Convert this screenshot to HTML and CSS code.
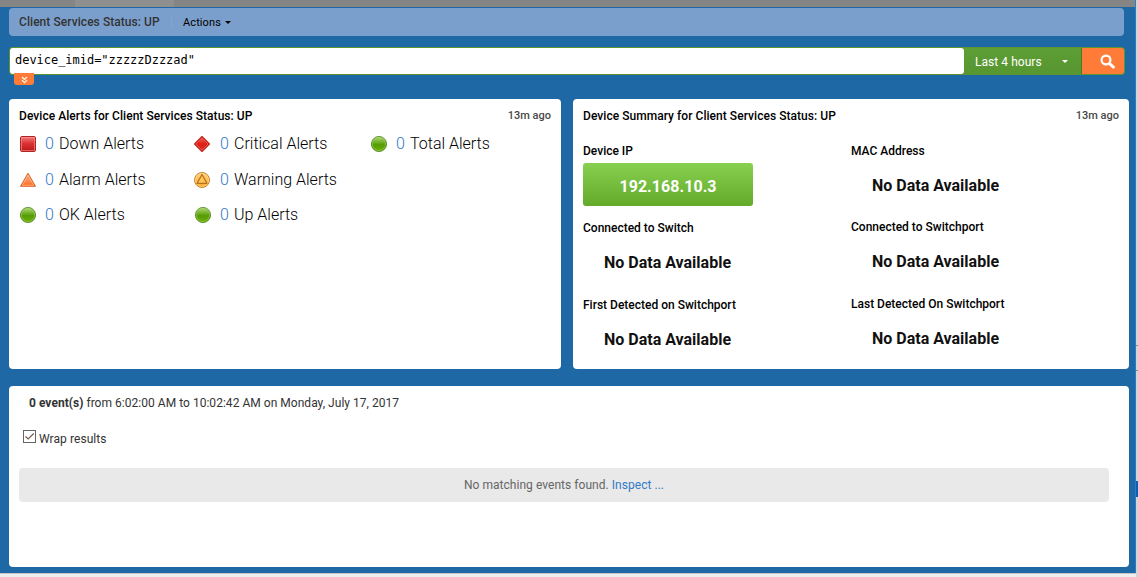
FILE: index.html
```html
<!DOCTYPE html>
<html lang="en">
<head>
<meta charset="utf-8">
<title>Client Services Status: UP</title>
<link rel="stylesheet" href="styles.css">
</head>
<body>
<svg class="defs" width="0" height="0" aria-hidden="true">
  <defs>
    <linearGradient id="red" x1="0" y1="0" x2="0" y2="1"><stop offset="0" stop-color="#f08080"/><stop offset=".45" stop-color="#dc3434"/><stop offset="1" stop-color="#b91616"/></linearGradient>
    <linearGradient id="crit" x1="0" y1="0" x2="0" y2="1"><stop offset="0" stop-color="#f4675c"/><stop offset=".5" stop-color="#e21d12"/><stop offset="1" stop-color="#d0322b"/></linearGradient>
    <linearGradient id="orange" x1="0" y1="0" x2="0" y2="1"><stop offset="0" stop-color="#f9a070"/><stop offset=".55" stop-color="#f8905a"/><stop offset="1" stop-color="#ff6512"/></linearGradient>
    <linearGradient id="amber" x1="0" y1="0" x2="0" y2="1"><stop offset="0" stop-color="#ffd27d"/><stop offset="1" stop-color="#ffac2c"/></linearGradient>
    <linearGradient id="green" x1="0" y1="0" x2="0" y2="1"><stop offset="0" stop-color="#b4dc78"/><stop offset=".55" stop-color="#559c04"/><stop offset="1" stop-color="#6fb10b"/></linearGradient>
    <symbol id="ok" viewBox="0 0 16 16"><circle cx="8" cy="8" r="7.6" fill="url(#green)" stroke="#4b811b" stroke-width=".8"/><circle cx="8" cy="8" r="6.6" fill="none" stroke="#a4d36a" stroke-opacity=".65" stroke-width=".8"/></symbol>
  </defs>
</svg>
<div class="window">
  <div class="app">
    <div class="tabstrip"><span class="tab"></span></div>
    <header class="toolbar">
      <span class="toolbar-title">Client Services Status: UP</span>
      <span class="divider"></span>
      <span class="actions">Actions</span><i class="caret"></i>
    </header>
    <div class="search">
      <div class="query">device_imid="zzzzzDzzzad"</div>
      <div class="range"><span>Last 4 hours</span><i class="caret light"></i></div>
      <div class="go"><svg width="16" height="16" viewBox="0 0 16 16"><circle cx="6" cy="6" r="4.4" fill="none" stroke="#fff" stroke-width="2.2"/><path d="M9.300 9.300L14.300 14" stroke="#fff" stroke-width="3"/></svg></div>
      <div class="expand"><svg width="7" height="8" viewBox="0 0 7 8"><path d="M1 1L3.500 3.500 6 1M1 4.200L3.500 6.700 6 4.200" fill="none" stroke="#fff" stroke-width="1.100"/></svg></div>
    </div>
    <main class="panels">
      <section class="panel">
        <div class="panel-head"><h2>Device Alerts for Client Services Status: UP</h2><span class="age">13m ago</span></div>
        <div class="alerts">
          <div class="alert"><svg width="16" height="16" viewBox="0 0 16 16"><rect x=".5" y=".5" width="15" height="15" rx="1.500" fill="url(#red)" stroke="#b52222"/><rect x="1.500" y="1.500" width="13" height="13" fill="none" stroke="#f59a9a" stroke-opacity=".6"/></svg><b>0</b><span>Down Alerts</span></div>
          <div class="alert middle"><svg width="16" height="16" viewBox="0 0 16 16"><path d="M8 1L15 8 8 15 1 8z" fill="url(#crit)" stroke="#c92b25" stroke-width="2" stroke-linejoin="round"/><path d="M8 2L14 8 8 14 2 8z" fill="none" stroke="#ff8b7d" stroke-opacity=".55" stroke-width=".8"/></svg><b>0</b><span>Critical Alerts</span></div>
          <div class="alert"><svg width="16" height="16"><use href="#ok"/></svg><b>0</b><span>Total Alerts</span></div>
          <div class="alert"><svg width="16" height="16" viewBox="0 0 16 16"><path d="M8 1.200L15.500 14.300H.5z" fill="url(#orange)" stroke="#d9652b" stroke-linejoin="round"/><path d="M8 3.400L13.700 13.300H2.300z" fill="none" stroke="#ffc29c" stroke-opacity=".75" stroke-width=".9"/></svg><b>0</b><span>Alarm Alerts</span></div>
          <div class="alert middle"><svg width="16" height="16" viewBox="0 0 16 16"><circle cx="8" cy="8" r="7.500" fill="url(#amber)" stroke="#c9802b"/><circle cx="8" cy="8" r="6.500" fill="none" stroke="#ffe1a0" stroke-width=".6"/><path d="M8 2.500L13 11.400H3z" fill="#ffc45c" stroke="#b8701c" stroke-width="1.200" stroke-linejoin="round"/></svg><b>0</b><span>Warning Alerts</span></div>
          <div></div>
          <div class="alert"><svg width="16" height="16"><use href="#ok"/></svg><b>0</b><span>OK Alerts</span></div>
          <div class="alert up"><svg width="16" height="16"><use href="#ok"/></svg><b>0</b><span>Up Alerts</span></div>
        </div>
      </section>
      <section class="panel">
        <div class="panel-head"><h2>Device Summary for Client Services Status: UP</h2><span class="age">13m ago</span></div>
        <div class="summary">
          <div class="column">
            <div class="field"><h3>Device IP</h3><div class="ip">192.168.10.3</div></div>
            <div class="field"><h3>Connected to Switch</h3><div class="value">No Data Available</div></div>
            <div class="field"><h3>First Detected on Switchport</h3><div class="value">No Data Available</div></div>
          </div>
          <div class="column second">
            <div class="field"><h3>MAC Address</h3><div class="value">No Data Available</div></div>
            <div class="field"><h3>Connected to Switchport</h3><div class="value">No Data Available</div></div>
            <div class="field"><h3>Last Detected On Switchport</h3><div class="value">No Data Available</div></div>
          </div>
        </div>
      </section>
    </main>
    <section class="events">
      <p class="period"><strong>0 event(s)</strong> from 6:02:00 AM to 10:02:42 AM on Monday, July 17, 2017</p>
      <div class="wrap"><svg width="13" height="13" viewBox="0 0 13 13"><rect x=".5" y=".5" width="12" height="12" fill="#fff" stroke="#666"/><path d="M2.500 6.500L5.200 9 10.700 3.500" fill="none" stroke="#75564a" stroke-width="1.100"/></svg><span>Wrap results</span></div>
      <div class="empty">No matching events found. <a>Inspect ...</a></div>
    </section>
  </div>
  <div class="edge"><i class="edge-control"></i><i class="edge-selection"></i></div>
</div>
</body>
</html>
```
FILE: styles.css
```css
* { box-sizing: border-box; }
body { margin: 0; font: 12px/16px Roboto, sans-serif; color: #333; overflow: hidden; background: #eee; }
h2, h3, p { margin: 0; }
svg { display: block; flex: none; }
.defs { position: absolute; }
.window { display: flex; width: 1138px; height: 577px; }
.app { width: 1136px; height: 573px; background: #1d68a5; border-right: 1px solid #2a7bc8; box-shadow: 0 1px #c6c6c6; }
.tabstrip { height: 7px; background: #858585; padding-left: 75px; }
.tab { display: block; width: 99px; height: 7px; background: #8f8f8f; }
.toolbar { display: flex; align-items: center; width: 1115px; height: 28px; margin: 1px 0 0 9px; padding: 0 10px; border-radius: 4px; background: #7b9fcc; }
.toolbar-title { width: 141px; font-weight: 500; letter-spacing: .06px; white-space: nowrap; }
.divider { width: 1px; height: 11px; margin: 0 11px; background: #8ba4c4; }
.actions { padding-top: 1px; font-size: 11px; color: #000; letter-spacing: .1px; }
.caret { width: 0; height: 0; margin: 1px 0 0 4px; border: 3px solid transparent; border-top-color: #000; border-bottom: 0; }
.caret.light { border-top-color: #fff; margin: 0; }
.search { position: relative; display: flex; width: 1116px; height: 28px; margin: 11px 0 0 9px; padding: 1px; background: #5b9432; border-radius: 4px; }
.query { width: 954px; height: 26px; padding: 4px 5px; background: #fff; border-radius: 3px; color: #000; font: 12px/16px "DejaVu Sans Mono", monospace; letter-spacing: -.03px; }
.range { display: flex; flex: 1; align-items: center; justify-content: space-between; padding: 1px 13px 0 11px; color: #fff; background: linear-gradient(#5e9e36, #579630); border-right: 1px solid #477c26; letter-spacing: .05px; }
.go { width: 42px; padding: 6px 0 0 18px; background: #ff7c38; border-radius: 0 3px 3px 0; }
.expand { position: absolute; left: 5px; top: 26px; display: flex; justify-content: center; width: 20px; height: 12px; padding-top: 3px; background: #ff7c38; border-radius: 0 0 3px 3px; }
.panels { display: grid; grid-template-columns: 552px 556px; gap: 12px; margin: 24px 0 0 9px; }
.panel { height: 270px; padding: 9px 10px; background: #fff; border-radius: 4px; }
.panel-head { display: flex; justify-content: space-between; height: 16px; }
h2, h3 { font-size: 12px; line-height: 16px; font-weight: 500; color: #000; white-space: nowrap; }
h2 { letter-spacing: .045px; }
.age { font-size: 11px; font-weight: 500; color: #484848; }
.alerts { display: grid; grid-template-columns: 174px 177px 1fr; grid-template-rows: 36px 35px 35px; align-items: center; margin-top: 2px; padding-left: 1px; }
.alert { display: flex; align-items: center; font-size: 16px; font-weight: 300; line-height: 20px; color: #000; white-space: nowrap; }
.alert b { width: 9px; margin: 0 5px 0 9px; font-weight: 300; color: #3277c8; }
.alert.middle b { margin-left: 10px; }
.alert.up { padding-left: 1px; }
.summary { display: grid; grid-template-columns: 268px 1fr; padding-top: 19px; }
.field { height: 77px; }
.second .field:first-child { height: 76px; }
.value { padding: 17px 0 0 21px; font-size: 16px; line-height: 20px; font-weight: 700; color: #111; }
.ip { width: 170px; height: 43px; margin-top: 4px; border-radius: 3px; background: linear-gradient(#88d04f, #63aa2b); color: #fff; font-size: 16px; font-weight: 700; line-height: 47px; letter-spacing: .05px; text-align: center; }
.events { width: 1120px; height: 181px; margin: 17px 0 0 9px; padding: 9px 20px 0 10px; background: #fff; border-radius: 4px; }
.period { padding-left: 10px; letter-spacing: .03px; }
.period strong { font-weight: 700; }
.wrap { display: flex; gap: 3px; padding: 19px 0 0 4px; letter-spacing: .07px; }
.wrap span { padding-top: 1px; }
.empty { height: 34px; margin-top: 21px; line-height: 34px; text-align: center; color: #666; background: #e9e9e9; border-radius: 4px; letter-spacing: .04px; }
.empty a { color: #337ac7; }
.edge { display: flex; flex-direction: column; width: 2px; background: #d4d4d4; }
.edge-control { height: 26px; margin-top: 345px; border: solid #888; border-width: 1px 0; }
.edge-selection { height: 16px; margin-top: 110px; background: #0761b5; }
```
